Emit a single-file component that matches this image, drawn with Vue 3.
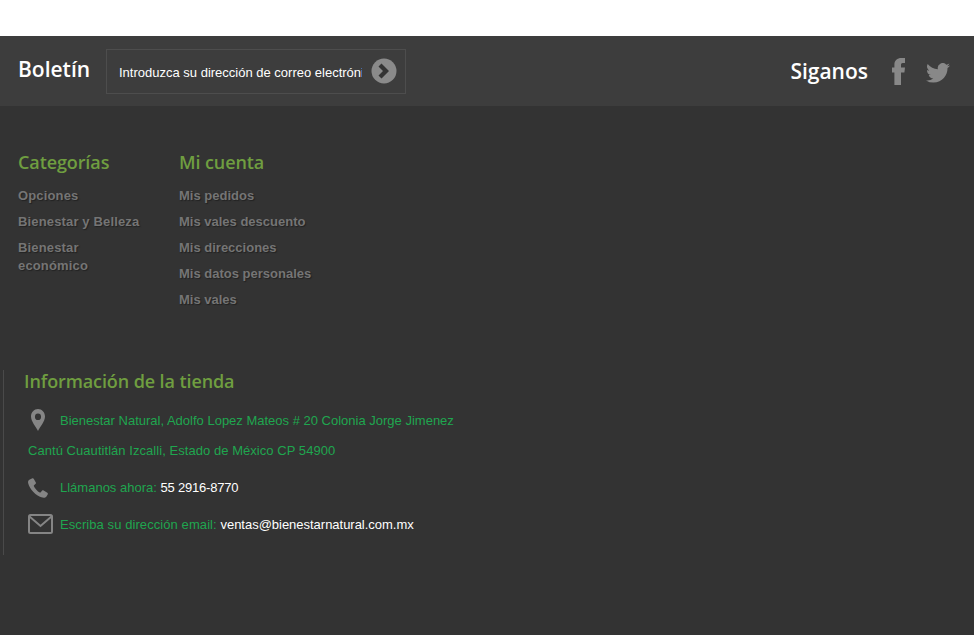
<script setup>
const categories = ['Opciones', 'Bienestar y Belleza', 'Bienestar económico']
const account = ['Mis pedidos', 'Mis vales descuento', 'Mis direcciones', 'Mis datos personales', 'Mis vales']
</script>

<template>
  <div class="page">
    <div class="top"></div>
    <footer class="footer">
      <section class="bar">
        <div class="news">
          <h3 class="bar-title">Boletín</h3>
          <form class="field" @submit.prevent>
            <input class="input" type="text" placeholder="Introduzca su dirección de correo electrónico" />
            <button class="go" type="button" aria-label="Enviar">
              <svg width="26" height="26" viewBox="0 0 26 26">
                <circle cx="13" cy="13" r="12.5" fill="#8a8a8a" />
                <path d="M10.5 5.5 L18 13 L10.5 20.5 L7.5 17.5 L12 13 L7.5 8.5 Z" fill="#333" />
              </svg>
            </button>
          </form>
        </div>
        <div class="social">
          <h3 class="follow">Siganos</h3>
          <svg class="fb" width="13" height="27" viewBox="0 0 13 27">
            <path d="M2.4 27 V14.5 H0 V9.5 H2.4 V6.5 C2.4 2.5 5.2 0 9.5 0 H13 V5 H10.8 C9.4 5 9 5.7 9 7 V9.5 H13 L12.4 14.5 H9 V27 Z" fill="#888" />
          </svg>
          <svg class="tw" width="24" height="20" viewBox="0 0 24 20">
            <path d="M24 2.4 a9.8 9.8 0 0 1-2.8.8 a4.9 4.9 0 0 0 2.2-2.7 a9.8 9.8 0 0 1-3.1 1.2 a4.9 4.9 0 0 0-8.4 4.5 A14 14 0 0 1 1.7 1 a4.9 4.9 0 0 0 1.5 6.6 a4.9 4.9 0 0 1-2.2-.6 a4.9 4.9 0 0 0 3.9 4.9 a4.9 4.9 0 0 1-2.2.1 a4.9 4.9 0 0 0 4.6 3.4 A9.9 9.9 0 0 1 0 17.4 A14 14 0 0 0 7.5 19.6 c9 0 14-7.5 14-14 v-.6 A10 10 0 0 0 24 2.4 Z" fill="#888" />
          </svg>
        </div>
      </section>

      <section class="columns">
        <div class="col col-a">
          <h4 class="heading">Categorías</h4>
          <ul class="list">
            <li v-for="c in categories" :key="c"><a class="link">{{ c }}</a></li>
          </ul>
        </div>
        <div class="col col-b">
          <h4 class="heading">Mi cuenta</h4>
          <ul class="list">
            <li v-for="a in account" :key="a"><a class="link">{{ a }}</a></li>
          </ul>
        </div>
      </section>

      <section class="info">
        <h4 class="heading info-title">Información de la tienda</h4>
        <div class="line line-pin">
          <svg class="ic-pin" width="14" height="22" viewBox="0 0 16 23" preserveAspectRatio="none">
            <path fill-rule="evenodd" d="M8 0 C3.6 0 0 3.5 0 7.9 C0 13 5.5 18.5 8 23 C10.5 18.5 16 13 16 7.9 C16 3.5 12.4 0 8 0 Z M8 4.6 A3.5 3.5 0 1 1 8 11.6 A3.5 3.5 0 1 1 8 4.6 Z" fill="#858585" />
          </svg>
          <span>Bienestar Natural, Adolfo Lopez Mateos # 20 Colonia Jorge Jimenez</span>
        </div>
        <div class="line line-addr">Cantú Cuautitlán Izcalli, Estado de México CP 54900</div>
        <div class="line line-phone">
          <svg class="ic-phone" width="20" height="20" viewBox="0 0 21 21">
            <path d="M4.6 0.3 L1.4 1.8 C0.2 2.5 -0.2 4 0.2 5.6 C1.6 11.8 8.6 19 15 20.6 C16.8 21 18.6 20.6 19.4 19.4 L20.8 17 C21 16.4 20.8 15.9 20.3 15.6 L16.4 13 C15.9 12.7 15.3 12.7 14.9 13.2 L13.4 15 C13.1 15.3 12.7 15.4 12.3 15.2 C10 14 7.2 11 6.2 8.6 C6 8.2 6.1 7.8 6.4 7.5 L8 6 C8.4 5.6 8.5 5.1 8.2 4.6 L6 0.8 C5.7 0.3 5.1 0.1 4.6 0.3 Z" fill="#858585" />
          </svg>
          <span>Llámanos ahora: <b class="val tel">55 2916-8770</b></span>
        </div>
        <div class="line line-mail">
          <svg class="ic-mail" width="25" height="20" viewBox="0 0 25 20">
            <rect x="1" y="1" width="23" height="18" rx="1.5" fill="none" stroke="#858585" stroke-width="2" />
            <path d="M1.5 2.5 L12.5 12 L23.5 2.5" fill="none" stroke="#858585" stroke-width="2" />
          </svg>
          <span>Escriba su dirección email: <b class="val mail">ventas@bienestarnatural.com.mx</b></span>
        </div>
      </section>
    </footer>
  </div>
</template>

<style>
html, body { margin: 0; background: #333; }
</style>

<style scoped>
.page {
  width: 974px;
  height: 635px;
  overflow: hidden;
  background: #333;
  font-family: "Liberation Sans", Arial, sans-serif;
}
.top { height: 36px; background: #fff; }
.bar {
  height: 70px;
  background: #3d3d3d;
  display: flex;
  justify-content: space-between;
  align-items: flex-start;
  padding: 0 24px 0 18px;
}
.news { display: flex; align-items: flex-start; }
.bar-title, .follow {
  margin: 0;
  font-family: "Open Sans", sans-serif;
  font-weight: 600;
  font-size: 21px;
  line-height: 28px;
  color: #fff;
}
.bar-title { margin-top: 19px; width: 88px; }
.field {
  margin-top: 13px;
  width: 300px;
  height: 45px;
  box-sizing: border-box;
  border: 1px solid #4d4d4d;
  display: flex;
  align-items: center;
}
.input {
  width: 243px;
  margin: 2px 0 0 12px;
  padding: 0;
  border: 0;
  background: transparent;
  outline: none;
  font: 13px "Liberation Sans", Arial, sans-serif;
  color: #fff;
}
.input::placeholder { color: #fff; opacity: 1; }
.go {
  margin: -2px 0 0 9px;
  padding: 0;
  border: 0;
  background: none;
  width: 26px;
  height: 26px;
}
.go svg { display: block; }
.social { display: flex; align-items: flex-start; }
.follow { margin-top: 21px; }
.fb { margin: 22px 0 0 24px; display: block; }
.tw { margin: 27px 0 0 21px; display: block; }

.columns { display: flex; padding: 42px 0 0 18px; height: 264px; box-sizing: border-box; }
.col-a { width: 161px; }
.heading {
  margin: 0;
  font-family: "Open Sans", sans-serif;
  font-weight: 600;
  font-size: 18px;
  line-height: 28px;
  letter-spacing: -0.1px;
  color: #6f9e40;
}
.list { list-style: none; margin: 11px 0 0; padding: 0; width: 130px; }
.col-a .list { letter-spacing: 0.15px; }
.col-b .list { width: 150px; }
.list li { margin-bottom: 8px; font-size: 13px; line-height: 18px; }
.link {
  font-weight: 700;
  color: #757575;
  text-shadow: 1px 1px 1px #222;
}
.info {
  display: flow-root;
  margin-left: 3px;
  height: 185px;
  border-left: 1px solid #4a4a4a;
  padding-left: 20px;
  font-size: 13px;
  color: #1fa64f;
}
.info-title { margin-top: -3px; }
.line { display: flex; align-items: center; }
.line span { display: block; }
.line-pin { margin: 13px 0 0 7px; height: 24px; }
.ic-pin { margin-right: 15px; }
.line-addr { margin: 8px 0 0 4px; height: 20px; letter-spacing: 0.05px; }
.line-phone { margin: 17px 0 0 4px; height: 21px; }
.ic-phone { margin-right: 12px; }
.line-mail { margin: 16px 0 0 4px; height: 20px; letter-spacing: 0.08px; }
.ic-mail { margin-right: 7px; }
.val { font-weight: 400; color: #fff; }
.tel { letter-spacing: -0.2px; }
.mail { letter-spacing: -0.02px; }
</style>
